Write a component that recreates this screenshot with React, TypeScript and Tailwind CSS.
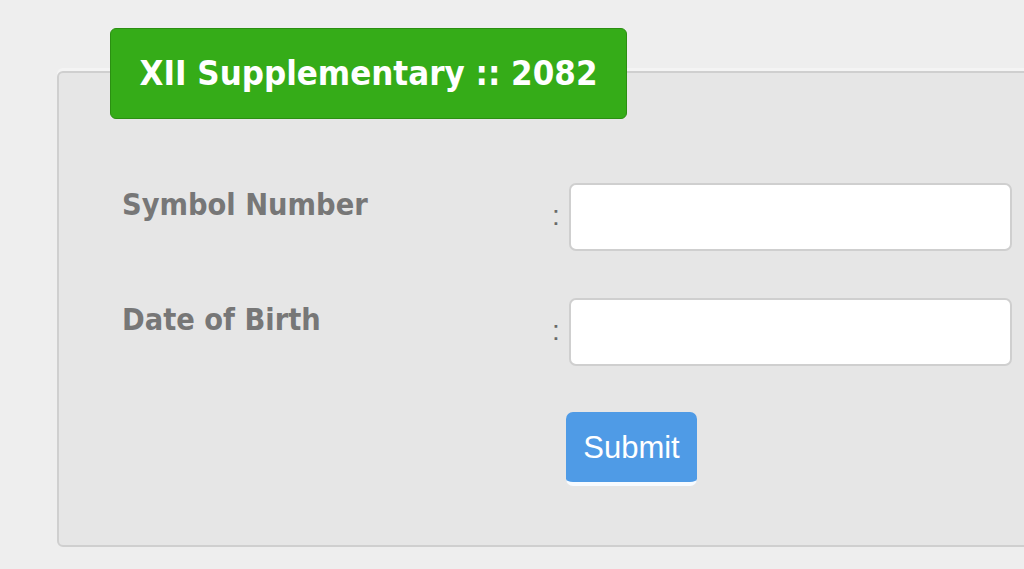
import React from "react";

export default function App() {
  const labelFont = { fontFamily: '"DejaVu Sans Condensed", "DejaVu Sans", sans-serif' };
  return (
    <div className="w-[1024px] h-[569px] overflow-hidden bg-[#eeeeee] pt-[71px] pl-[57px]">
      <div className="w-[1000px] h-[476px] bg-[#e6e6e6] border-2 border-[#cfcfcf] rounded-[6px] pl-[63px] shadow-[0_-3px_0_#f4f4f4]">
        <div className="-mt-[45px] -ml-[12px] w-[517px] h-[91px] bg-[#35ac18] border border-[#2b8f12] rounded-[6px] flex items-center justify-center">
          <span className="text-white font-bold text-[34.5px] leading-none" style={labelFont}>
            XII Supplementary :: 2082
          </span>
        </div>
        <div className="mt-[64px] flex flex-col gap-[47px]">
          {["Symbol Number", "Date of Birth"].map((label) => (
            <div key={label} className="flex items-start h-[68px]">
              <div className="w-[428px] pt-[4px] text-[30.4px] font-bold text-[#777777] leading-[36px]" style={labelFont}>
                {label}
              </div>
              <div className="w-[19px] pt-[16px] pl-[2px] text-[28px] text-[#6a6a6a] leading-[34px]" style={{ fontFamily: '"Liberation Sans", sans-serif' }}>
                :
              </div>
              <input className="w-[443px] h-[68px] bg-white border-2 border-[#cfcfcf] rounded-[7px] outline-none" />
            </div>
          ))}
        </div>
        <div className="mt-[46px] ml-[444px]">
          <button className="w-[131px] h-[74px] bg-[#4f9be6] rounded-[7px] border-b-[4px] border-[#f7fbff] text-white text-[31px] leading-none" style={{ fontFamily: '"Liberation Sans", Arial, sans-serif' }}>
            Submit
          </button>
        </div>
      </div>
    </div>
  );
}
